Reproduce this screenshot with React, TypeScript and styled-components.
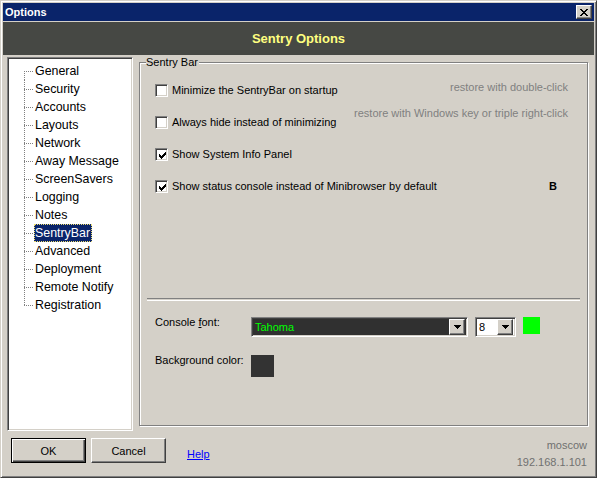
import React from "react";
import styled, { createGlobalStyle } from "styled-components";

const GlobalStyle = createGlobalStyle`
  html, body {
    margin: 0;
    padding: 0;
    background: #d4d0c8;
  }
  body {
    font-family: "Liberation Sans", Arial, sans-serif;
    font-size: 11px;
    color: #000;
  }
`;

const Window = styled.div`
  width: 597px;
  height: 478px;
  box-sizing: border-box;
  background: #d4d0c8;
  border: 1px solid;
  border-color: #d4d0c8 #404040 #404040 #d4d0c8;
  box-shadow: inset 1px 1px #fff, inset -1px -1px #808080;
  padding: 2px;
  display: flex;
  flex-direction: column;
`;

const TitleBar = styled.div`
  height: 18px;
  flex: none;
  background: #0a246a;
  display: flex;
  align-items: center;
  justify-content: space-between;
  padding: 0 2px;
`;

const Title = styled.span`
  color: #fff;
  font-weight: bold;
  font-size: 11px;
`;

const RaisedButton = styled.button`
  box-sizing: border-box;
  background: #d4d0c8;
  border: 1px solid;
  border-color: #fff #404040 #404040 #fff;
  box-shadow: inset -1px -1px #808080;
  padding: 0;
  margin: 0;
  font: inherit;
  color: #000;
  display: flex;
  align-items: center;
  justify-content: center;
`;

const CloseButton = styled(RaisedButton)`
  width: 16px;
  height: 14px;
`;

const Header = styled.div`
  height: 33px;
  flex: none;
  margin-top: 1px;
  background: #464844;
  display: flex;
  align-items: center;
  justify-content: center;
  color: #ffff80;
  font-weight: bold;
  font-size: 13px;
`;

const Body = styled.div`
  height: 376px;
  flex: none;
  box-sizing: border-box;
  padding: 2px 6px 0 4px;
  display: flex;
  gap: 6px;
  align-items: flex-start;
`;

const Sunken = styled.div`
  box-sizing: border-box;
  border: 1px solid;
  border-color: #808080 #fff #fff #808080;
  box-shadow: inset 1px 1px #404040, inset -1px -1px #d4d0c8;
`;

const Tree = styled(Sunken)`
  width: 126px;
  height: 374px;
  background: #fff;
  padding: 4px 0 0 16px;
  display: flex;
  flex-direction: column;
`;

const TreeRow = styled.div`
  height: 18px;
  display: flex;
  align-items: stretch;
`;

const Connector = styled.span<{ $first?: boolean; $last?: boolean }>`
  width: 9px;
  flex: none;
  background-image: repeating-linear-gradient(
      to bottom,
      #808080 0 1px,
      transparent 1px 2px
    ),
    repeating-linear-gradient(to right, #808080 0 1px, transparent 1px 2px);
  background-repeat: no-repeat;
  background-size: 1px ${(p) => (p.$first ? "9px" : p.$last ? "10px" : "18px")},
    9px 1px;
  background-position: 0 ${(p) => (p.$first ? "9px" : "0")}, 0 9px;
`;

const TreeLabel = styled.span<{ $selected?: boolean }>`
  margin-left: 1px;
  padding: 0 2px 0 1px;
  display: flex;
  align-items: center;
  font-size: 12.4px;
  white-space: nowrap;
  background: ${(p) => (p.$selected ? "#0a246a" : "transparent")};
  color: ${(p) => (p.$selected ? "#fff" : "#000")};
  outline: ${(p) => (p.$selected ? "1px dotted #f0e070" : "none")};
  outline-offset: -1px;
`;

const Panel = styled.div`
  position: relative;
  flex: 1;
  margin-top: 5px;
  height: 364px;
  box-sizing: border-box;
  border: 1px solid #808080;
  box-shadow: inset 1px 1px #fff, 1px 1px #fff;
  display: flex;
  flex-direction: column;
`;

const Legend = styled.span`
  position: absolute;
  top: -7px;
  left: 6px;
  padding: 0 1px 0 0;
  background: #d4d0c8;
  line-height: 13px;
`;

const OptionList = styled.div`
  padding: 11px 19px 0 15px;
  display: flex;
  flex-direction: column;
`;

const OptionRow = styled.div`
  height: 32px;
  display: flex;
  align-items: center;
`;

const CheckBox = styled(Sunken)`
  width: 13px;
  height: 13px;
  flex: none;
  background: #fff;
  display: flex;
  align-items: flex-start;
  justify-content: flex-start;
  padding: 3px 0 0 3px;
`;

const OptionLabel = styled.span`
  margin-left: 4px;
  line-height: 13px;
  white-space: nowrap;
`;

const Hint = styled.span<{ $offset: number }>`
  margin-left: auto;
  align-self: flex-start;
  margin-top: ${(p) => p.$offset}px;
  line-height: 13px;
  color: #808080;
  white-space: nowrap;
`;

const Badge = styled.span`
  margin-left: auto;
  margin-right: 11px;
  font-weight: bold;
  font-size: 11px;
`;

const Separator = styled.div`
  margin: 96px 7px 0 7px;
  height: 1px;
  border-top: 1px solid #808080;
  border-bottom: 1px solid #fff;
`;

const Settings = styled.div`
  padding: 16px 0 0 15px;
  display: flex;
  flex-direction: column;
  gap: 18px;
`;

const SettingRow = styled.div`
  display: flex;
  align-items: flex-start;
`;

const SettingLabel = styled.span`
  width: 96px;
  flex: none;
  line-height: 13px;
  margin-top: -1px;
`;

const Combo = styled(Sunken)<{ $width: number; $dark?: boolean; $gap?: number }>`
  width: ${(p) => p.$width}px;
  height: 20px;
  padding: 2px;
  margin-left: ${(p) => p.$gap ?? 0}px;
  display: flex;
  align-items: center;
  background: ${(p) => (p.$dark ? "#303030" : "#fff")};
  color: ${(p) => (p.$dark ? "#00ff00" : "#000")};
`;

const ComboText = styled.span`
  flex: 1;
  padding-left: 1px;
  line-height: 13px;
`;

const ArrowButton = styled(RaisedButton)`
  width: 16px;
  height: 16px;
  flex: none;
`;

const Swatch = styled.div<{ $color: string; $w: number; $h: number; $gap?: number }>`
  width: ${(p) => p.$w}px;
  height: ${(p) => p.$h}px;
  flex: none;
  background: ${(p) => p.$color};
  margin-left: ${(p) => p.$gap ?? 0}px;
`;

const Footer = styled.div`
  flex: 1;
  display: flex;
  align-items: flex-start;
  padding: 7px 7px 0 8px;
`;

const DialogButton = styled(RaisedButton)<{ $default?: boolean }>`
  width: 75px;
  height: 25px;
  font-size: 11px;
  ${(p) =>
    p.$default
      ? `border-color: #000;
         box-shadow: inset 1px 1px #fff, inset -1px -1px #404040, inset -2px -2px #808080;`
      : ""}
  & + & {
    margin-left: 5px;
  }
`;

const HelpLink = styled.a`
  margin: 10px 0 0 21px;
  line-height: 13px;
  color: #0000ff;
  text-decoration: underline;
  cursor: pointer;
`;

const Info = styled.div`
  margin-left: auto;
  margin-top: -1px;
  text-align: right;
  line-height: 17px;
  color: #707070;
`;

const CheckMark = () => (
  <svg width="7" height="7" viewBox="0 0 7 7" shapeRendering="crispEdges">
    {[2, 3, 4, 3, 2, 1, 0].map((y, x) => (
      <rect key={x} x={x} y={y} width="1" height="3" fill="#000" />
    ))}
  </svg>
);

const DownArrow = () => (
  <svg width="7" height="4" viewBox="0 0 7 4" shapeRendering="crispEdges">
    {[0, 1, 2, 3].map((r) => (
      <rect key={r} x={r} y={r} width={7 - 2 * r} height="1" fill="#000" />
    ))}
  </svg>
);

const CloseGlyph = () => (
  <svg width="8" height="7" viewBox="0 0 8 7" shapeRendering="crispEdges">
    {[0, 1, 2, 3, 4, 5, 6].map((r) => {
      const d = r <= 3 ? r : 6 - r;
      return (
        <g key={r}>
          <rect x={d} y={r} width="2" height="1" fill="#000" />
          <rect x={6 - d} y={r} width="2" height="1" fill="#000" />
        </g>
      );
    })}
  </svg>
);

const treeItems = [
  "General",
  "Security",
  "Accounts",
  "Layouts",
  "Network",
  "Away Message",
  "ScreenSavers",
  "Logging",
  "Notes",
  "SentryBar",
  "Advanced",
  "Deployment",
  "Remote Notify",
  "Registration",
];

const options = [
  { label: "Minimize the SentryBar on startup", checked: false, hint: "restore with double-click", hintOffset: 7 },
  {
    label: "Always hide instead of minimizing",
    checked: false,
    hint: "restore with Windows key or triple right-click",
    hintOffset: 1,
  },
  { label: "Show System Info Panel", checked: true },
  { label: "Show status console instead of Minibrowser by default", checked: true, badge: "B" },
];

const App = () => {
  const selected = "SentryBar";
  return (
    <>
      <GlobalStyle />
      <Window>
        <TitleBar>
          <Title>Options</Title>
          <CloseButton>
            <CloseGlyph />
          </CloseButton>
        </TitleBar>
        <Header>Sentry Options</Header>
        <Body>
          <Tree>
            {treeItems.map((item, i) => (
              <TreeRow key={item}>
                <Connector $first={i === 0} $last={i === treeItems.length - 1} />
                <TreeLabel $selected={item === selected}>{item}</TreeLabel>
              </TreeRow>
            ))}
          </Tree>
          <Panel>
            <Legend>Sentry Bar</Legend>
            <OptionList>
              {options.map((o) => (
                <OptionRow key={o.label}>
                  <CheckBox>{o.checked && <CheckMark />}</CheckBox>
                  <OptionLabel>{o.label}</OptionLabel>
                  {o.hint && <Hint $offset={o.hintOffset ?? 0}>{o.hint}</Hint>}
                  {o.badge && <Badge>{o.badge}</Badge>}
                </OptionRow>
              ))}
            </OptionList>
            <Separator />
            <Settings>
              <SettingRow>
                <SettingLabel>
                  Console <u>f</u>ont:
                </SettingLabel>
                <Combo $width={217} $dark>
                  <ComboText>Tahoma</ComboText>
                  <ArrowButton>
                    <DownArrow />
                  </ArrowButton>
                </Combo>
                <Combo $width={41} $gap={7}>
                  <ComboText>8</ComboText>
                  <ArrowButton>
                    <DownArrow />
                  </ArrowButton>
                </Combo>
                <Swatch $color="#00ff00" $w={17} $h={17} $gap={7} />
              </SettingRow>
              <SettingRow>
                <SettingLabel>Background color:</SettingLabel>
                <Swatch $color="#333333" $w={23} $h={22} />
              </SettingRow>
            </Settings>
          </Panel>
        </Body>
        <Footer>
          <DialogButton $default>OK</DialogButton>
          <DialogButton>Cancel</DialogButton>
          <HelpLink>Help</HelpLink>
          <Info>
            moscow
            <br />
            192.168.1.101
          </Info>
        </Footer>
      </Window>
    </>
  );
};

export default App;
